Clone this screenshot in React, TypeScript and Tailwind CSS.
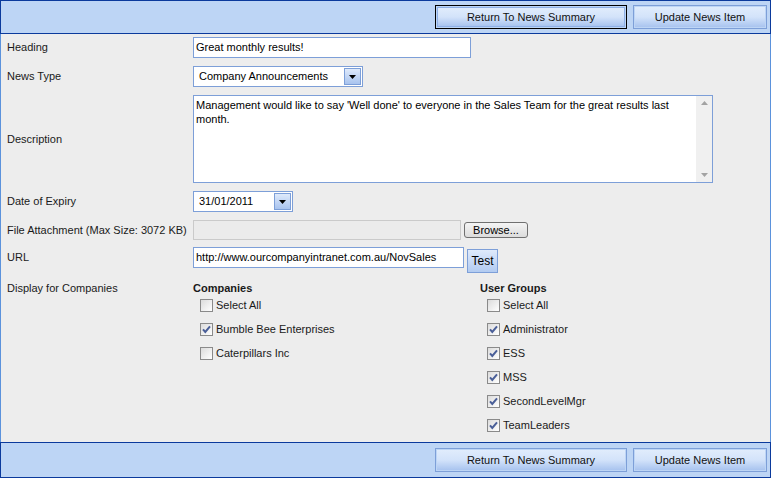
import React from 'react';

const companies = [
  { label: 'Select All', checked: false },
  { label: 'Bumble Bee Enterprises', checked: true },
  { label: 'Caterpillars Inc', checked: false },
];

const userGroups = [
  { label: 'Select All', checked: false },
  { label: 'Administrator', checked: true },
  { label: 'ESS', checked: true },
  { label: 'MSS', checked: true },
  { label: 'SecondLevelMgr', checked: true },
  { label: 'TeamLeaders', checked: true },
];

const BarButton = ({ label, focused, width }: { label: string; focused?: boolean; width: string }) => (
  <button
    className={`${width} h-[24px] p-[1px] ${focused ? 'border border-black' : 'border border-[#7d9fd8]'}`}
  >
    <span
      className={`flex h-full w-full items-center justify-center bg-linear-to-b from-[#e0ecfc] via-[#d3e3fa] to-[#a9c4ef] text-[11px] text-[#111] ${
        focused ? 'border border-[#8fb0e6]' : ''
      }`}
    >
      {label}
    </span>
  </button>
);

const Bar = ({ height }: { height: string }) => (
  <div
    className={`${height} flex shrink-0 items-center justify-end gap-[6px] border border-[#0b3a9c] bg-[#bdd5f5] pr-[3px]`}
  >
    <BarButton label="Return To News Summary" width="w-[192px]" focused={height === 'h-[34px]'} />
    <BarButton label="Update News Item" width="w-[134px]" />
  </div>
);

const DropArrow = () => (
  <span className="flex h-full w-[17px] items-center justify-center border border-[#7d9fd8] bg-linear-to-b from-[#dfeafb] to-[#a8c3ee]">
    <svg width="7" height="4" viewBox="0 0 7 4">
      <path d="M0 0h7L3.5 4z" fill="#000" />
    </svg>
  </span>
);

const Select = ({ value, width }: { value: string; width: string }) => (
  <div className={`${width} flex h-[21px] items-center border border-[#7d9fd8] bg-white p-[1px]`}>
    <span className="flex-1 pl-[4px] text-black">{value}</span>
    <DropArrow />
  </div>
);

const Checkbox = ({ label, checked }: { label: string; checked: boolean }) => (
  <div className="flex h-[24px] items-center pl-[7px]">
    <span className="flex h-[13px] w-[13px] items-center justify-center border border-[#8a8a8a] bg-linear-to-br from-[#dcdcdc] to-white">
      {checked && (
        <svg width="9" height="9" viewBox="0 0 9 9">
          <path d="M1 4.3l2.3 2.6L8 1.3" stroke="#4a5f98" strokeWidth="2" fill="none" />
        </svg>
      )}
    </span>
    <span className="ml-[3px] text-[#1a1a1a]">{label}</span>
  </div>
);

const Row = ({ label, children, className = '' }: { label: string; children: React.ReactNode; className?: string }) => (
  <div className={`flex items-center ${className}`}>
    <div className="w-[186px] shrink-0 text-[#1a1a1a]">{label}</div>
    {children}
  </div>
);

export default function App() {
  return (
    <div className="flex h-[478px] w-[771px] flex-col bg-white font-['Liberation_Sans',Arial,sans-serif] text-[11px]">
      <Bar height="h-[34px]" />

      <div className="flex flex-1 flex-col border-x border-[#5b92dc] bg-[#ededed] pl-[6px] pt-[3px]">
        <Row label="Heading">
          <div className="flex h-[21px] w-[278px] items-center border border-[#7d9fd8] bg-white pl-[2px] text-black">
            Great monthly results!
          </div>
        </Row>

        <Row label="News Type" className="mt-[8px]">
          <Select value="Company Announcements" width="w-[170px]" />
        </Row>

        <Row label="Description" className="mt-[8px]">
          <div className="flex h-[88px] w-[520px] border border-[#7d9fd8] bg-white">
            <p className="flex-1 px-[2px] pt-[2px] leading-[14px] text-black">
              Management would like to say 'Well done' to everyone in the Sales Team for the great results last
              month.
            </p>
            <div className="flex w-[16px] flex-col items-center justify-between bg-[#f0f0f0] py-[5px]">
              <svg width="7" height="4" viewBox="0 0 7 4">
                <path d="M3.5 0L7 4H0z" fill="#a3a3a3" />
              </svg>
              <svg width="7" height="4" viewBox="0 0 7 4">
                <path d="M0 0h7L3.5 4z" fill="#a3a3a3" />
              </svg>
            </div>
          </div>
        </Row>

        <Row label="Date of Expiry" className="mt-[8px]">
          <Select value="31/01/2011" width="w-[100px]" />
        </Row>

        <Row label="File Attachment (Max Size: 3072 KB)" className="mt-[8px]">
          <div className="h-[20px] w-[268px] border border-[#cacaca] bg-[#ebebeb]" />
          <button className="ml-[3px] flex h-[16px] w-[64px] items-center justify-center rounded-[3px] border border-[#707070] bg-linear-to-b from-[#f4f4f4] to-[#dcdcdc] text-[11px] text-black">
            Browse...
          </button>
        </Row>

        <div className="mt-[7px] flex items-start">
          <div className="flex h-[21px] w-[186px] shrink-0 items-center text-[#1a1a1a]">URL</div>
          <div className="flex h-[21px] w-[271px] items-center border border-[#7d9fd8] bg-white pl-[2px] text-black">
            http://www.ourcompanyintranet.com.au/NovSales
          </div>
          <button className="ml-[3px] mt-[2px] flex h-[24px] w-[31px] items-center justify-center border border-[#7d9fd8] bg-linear-to-b from-[#dfeafb] to-[#b2cbf1] text-[12px] text-black">
            Test
          </button>
        </div>

        <div className="mt-[9px] flex items-start">
          <div className="w-[186px] shrink-0 leading-[13px] text-[#1a1a1a]">Display for Companies</div>
          <div className="w-[287px]">
            <div className="h-[11px] font-bold leading-[13px] text-[#1a1a1a]">Companies</div>
            {companies.map((c) => (
              <Checkbox key={c.label} label={c.label} checked={c.checked} />
            ))}
          </div>
          <div>
            <div className="h-[11px] font-bold leading-[13px] text-[#1a1a1a]">User Groups</div>
            {userGroups.map((g) => (
              <Checkbox key={g.label} label={g.label} checked={g.checked} />
            ))}
          </div>
        </div>
      </div>

      <Bar height="h-[36px]" />
    </div>
  );
}
